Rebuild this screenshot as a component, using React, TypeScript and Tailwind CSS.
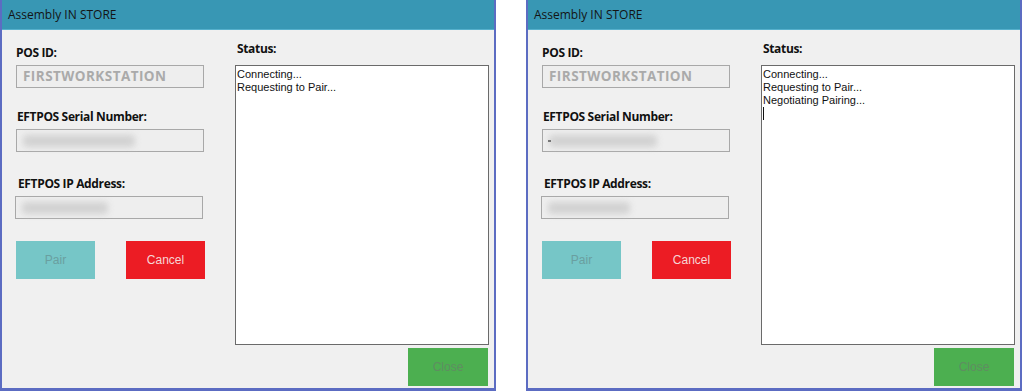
import React from "react";

type WindowProps = {
  lines: string[];
  caret?: boolean;
  serialBlur: number;
  ipBlur: number;
  serialDot?: boolean;
};

const LABEL = "text-[12px] font-bold leading-4 tracking-[-0.35px] text-[#111] [font-family:'Open_Sans','DejaVu_Sans',sans-serif]";

function BlurField({ width, dot, className }: { width: number; dot?: boolean; className?: string }) {
  return (
    <div className={`relative h-[23px] w-[188px] border border-[#a8a8a8] bg-[#eeeeee] ${className ?? ""}`}>
      <div
        className="absolute left-[6px] top-[5px] h-[12px] rounded-sm bg-[#d2d2d2] blur-[3px]"
        style={{ width }}
      />
      {dot && <div className="absolute left-[5px] top-[10px] h-[2px] w-[3px] bg-[#777] blur-[0.5px]" />}
    </div>
  );
}

function PairWindow({ lines, caret, serialBlur, ipBlur, serialDot }: WindowProps) {
  return (
    <div className="flex h-[391px] w-[496px] flex-col border-x-2 border-b-[3px] border-[#5c6cc2] bg-[#f0f0f0]">
      <div className="flex h-[30px] items-center border-b border-[#56b0cc] bg-[#3897b4] pl-[6px] text-[12px] text-[#141414] [font-family:'Open_Sans','DejaVu_Sans',sans-serif]">
        Assembly IN STORE
      </div>
      <div className="flex flex-1 pl-[14px] pr-[5px]">
        <div className="flex w-[189px] flex-col pt-[15px]">
          <div className={LABEL}>POS ID:</div>
          <div className="mt-[4px] flex h-[23px] w-[188px] items-center border border-[#a8a8a8] bg-[#eeeeee] pl-[6px] text-[13.5px] font-bold tracking-[0.45px] text-[#aaaaaa] [font-family:'Open_Sans','DejaVu_Sans',sans-serif]">
            FIRSTWORKSTATION
          </div>
          <div className={`${LABEL} mt-[21px] pl-[1px]`}>EFTPOS Serial Number:</div>
          <BlurField width={serialBlur} dot={serialDot} className="mt-[4px]" />
          <div className={`${LABEL} mt-[24px] pl-[2px]`}>EFTPOS IP Address:</div>
          <BlurField width={ipBlur} className="mt-[4px] -ml-[1px]" />
          <div className="mt-[22px] flex justify-between [font-family:'Liberation_Sans',Arial,sans-serif] text-[12px]">
            <div className="flex h-[38px] w-[79px] items-center justify-center bg-[#76c6c7] text-[#6a9fa0]">Pair</div>
            <div className="flex h-[38px] w-[79px] items-center justify-center bg-[#ec1c24] text-[#f6d6d6]">Cancel</div>
          </div>
        </div>
        <div className="ml-[30px] flex flex-1 flex-col pt-[11px]">
          <div className={`${LABEL} pl-[2px]`}>Status:</div>
          <div className="mt-[8px] h-[280px] w-[254px] border border-[#6a6a6a] bg-white px-[1px] pt-[2px] text-[11px] leading-[13px] text-[#111] [font-family:'Liberation_Sans',Arial,sans-serif]">
            {lines.map((l) => (
              <div key={l}>{l}</div>
            ))}
            {caret && <div className="h-[13px] w-px bg-[#111]" />}
          </div>
          <div className="mt-[3px] flex justify-end pr-[1px]">
            <div className="flex h-[38px] w-[80px] items-center justify-center bg-[#4caf50] text-[12px] text-[#5f8d61] [font-family:'Liberation_Sans',Arial,sans-serif]">
              Close
            </div>
          </div>
        </div>
      </div>
    </div>
  );
}

export default function App() {
  return (
    <div className="flex h-[391px] w-[1022px] justify-between bg-white">
      <PairWindow lines={["Connecting...", "Requesting to Pair..."]} serialBlur={112} ipBlur={86} />
      <PairWindow
        lines={["Connecting...", "Requesting to Pair...", "Negotiating Pairing..."]}
        caret
        serialBlur={108}
        ipBlur={82}
        serialDot
      />
    </div>
  );
}
